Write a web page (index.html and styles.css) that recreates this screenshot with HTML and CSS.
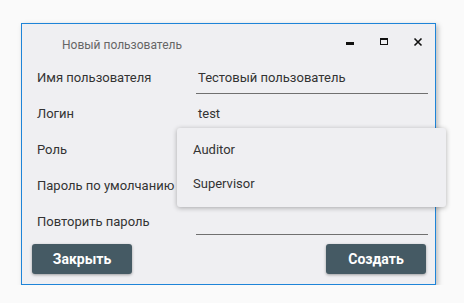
FILE: index.html
```html
<!DOCTYPE html>
<html lang="ru">
<head>
  <meta charset="UTF-8" />
  <title>Новый пользователь</title>
  <link rel="stylesheet" href="styles.css">
</head>
<body>
  <div class="window">
    <div class="titlebar">
      <span class="title">Новый пользователь</span>
      <div class="controls">
        <svg class="ctrl" width="10" height="10" viewBox="0 0 10 10"><rect x="1" y="5" width="8" height="3" fill="#111"/></svg>
        <svg class="ctrl" width="10" height="10" viewBox="0 0 10 10"><rect x="1.5" y="1.5" width="7" height="6" fill="none" stroke="#111" stroke-width="1"/><rect x="1" y="1" width="8" height="2" fill="#111"/></svg>
        <svg class="ctrl" width="10" height="10" viewBox="0 0 10 10"><path d="M1.5 1.5 L8.5 8.5 M8.5 1.5 L1.5 8.5" stroke="#111" stroke-width="1.6"/></svg>
      </div>
    </div>

    <div class="form">
      <div class="row">
        <label>Имя пользователя</label>
        <div class="field">Тестовый пользователь</div>
      </div>
      <div class="row">
        <label>Логин</label>
        <div class="field">test</div>
      </div>
      <div class="row">
        <label>Роль</label>
        <div class="field"></div>
      </div>
      <div class="row">
        <label>Пароль по умолчанию</label>
        <div class="field"></div>
      </div>
      <div class="row last">
        <label>Повторить пароль</label>
        <div class="field"></div>
      </div>
    </div>

    <div class="actions">
      <button>Закрыть</button>
      <button>Создать</button>
    </div>

    <div class="menu">
      <div class="menu-item">Auditor</div>
      <div class="menu-item">Supervisor</div>
    </div>
  </div>
</body>
</html>
```

FILE: styles.css
```css
* {
  box-sizing: border-box;
  margin: 0;
  padding: 0;
}
body {
  background: #fafafa;
  font-family: Roboto, 'Noto Sans', sans-serif;
  padding: 23px 0 0 21px;
}
.window {
  position: relative;
  width: 415px;
  height: 262px;
  background: #efeff2;
  border: 1px solid #1e84d8;
  box-shadow: 2px 2px 5px rgba(0,0,0,0.25);
  display: flex;
  flex-direction: column;
}
.titlebar {
  height: 38px;
  display: flex;
  align-items: center;
  justify-content: space-between;
  padding: 3px 12px 0 40px;
}
.title {
  font-size: 12px;
  color: #666;
}
.controls {
  display: flex;
  gap: 24px;
  align-items: center;
  margin-top: -6px;
}
.ctrl {
  display: block;
}
.form {
  padding: 1px 7px 0 15px;
}
.row {
  display: flex;
  height: 36px;
  align-items: flex-start;
}
.row label {
  width: 159px;
  font-size: 13px;
  color: #333;
  line-height: 30px;
}
.field {
  flex: 1;
  height: 31px;
  line-height: 30px;
  padding-left: 2px;
  font-size: 13px;
  color: #333;
  border-bottom: 1px solid #707070;
}
.row.last .field {
  height: 28px;
}
.actions {
  margin-top: auto;
  display: flex;
  justify-content: space-between;
  padding: 0 9px 10px 10px;
}
button {
  width: 100px;
  height: 30px;
  background: #455a64;
  color: #fff;
  border: none;
  border-radius: 3px;
  font-family: Roboto, 'Noto Sans', sans-serif;
  font-weight: 700;
  font-size: 14px;
  box-shadow: 0 1px 3px rgba(0,0,0,0.35);
}
.menu {
  position: absolute;
  left: 155px;
  top: 104px;
  width: 269px;
  height: 79px;
  background: #efeff2;
  border-radius: 3px;
  box-shadow: 0 1px 5px rgba(0,0,0,0.3);
  padding-top: 5px;
}
.menu-item {
  height: 34px;
  line-height: 34px;
  padding-left: 16px;
  font-size: 13px;
  color: #333;
}
```
